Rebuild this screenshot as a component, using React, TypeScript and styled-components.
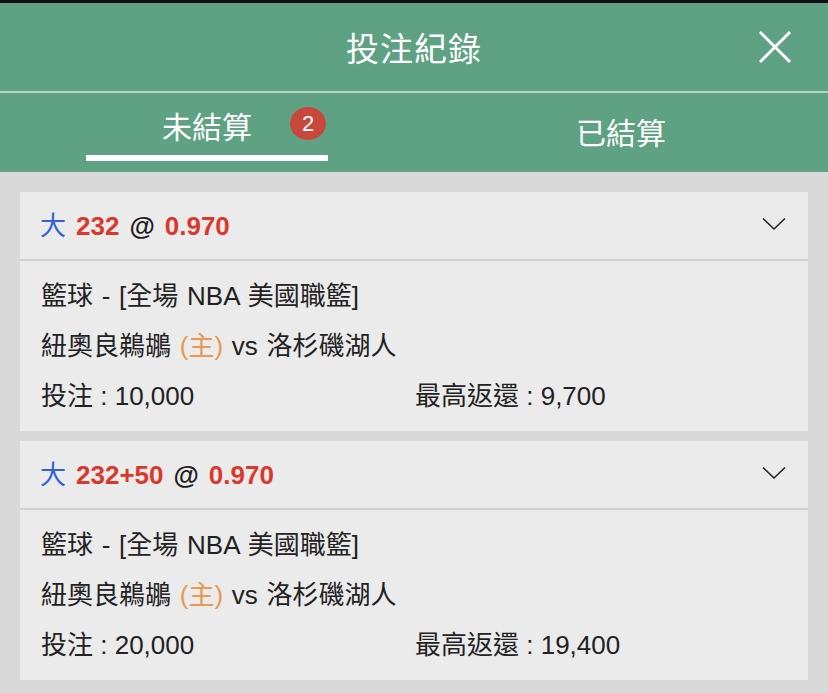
import React from 'react';
import styled, { createGlobalStyle } from 'styled-components';

const GlobalStyle = createGlobalStyle`
    html, body {
        margin: 0;
        padding: 0;
        background: #d9d9d9;
    }
    body {
        font-family: "Liberation Sans", "Noto Sans CJK TC", sans-serif;
        color: #222222;
    }
`;

const Page = styled.div`
    width: 828px;
    min-height: 693px;
    background: #d9d9d9;
    border-top: 3px solid #111111;
`;

const Header = styled.div`
    background: #5fa283;
`;

const TitleBar = styled.div`
    height: 88px;
    display: flex;
    align-items: center;
    justify-content: center;
    position: relative;
    border-bottom: 2px solid #b3d6c2;
`;

const Title = styled.h1`
    margin: 0;
    font-size: 33px;
    font-weight: 400;
    color: #ffffff;
    letter-spacing: 1px;
`;

const CloseButton = styled.button`
    position: absolute;
    right: 34px;
    top: 25px;
    width: 38px;
    height: 38px;
    padding: 0;
    border: none;
    background: transparent;
    display: flex;
    align-items: center;
    justify-content: center;
`;

const Tabs = styled.div`
    height: 79px;
    display: grid;
    grid-template-columns: 1fr 1fr;
`;

const Tab = styled.div<{ $active?: boolean }>`
    display: flex;
    flex-direction: column;
    align-items: center;
    justify-content: flex-end;
    padding-bottom: ${(p) => (p.$active ? '11px' : '18px')};
`;

const TabLabel = styled.div<{ $active?: boolean }>`
    position: relative;
    font-size: 30px;
    color: #ffffff;
    line-height: 40px;
    margin-bottom: ${(p) => (p.$active ? '7px' : '0')};
`;

const Badge = styled.span`
    position: absolute;
    left: 128px;
    top: -1px;
    width: 36px;
    height: 33px;
    border-radius: 50%;
    background: #c9483c;
    color: #ffffff;
    font-size: 22px;
    line-height: 33px;
    text-align: center;
`;

const Underline = styled.div`
    width: 242px;
    height: 6px;
    background: #ffffff;
`;

const List = styled.div`
    display: flex;
    flex-direction: column;
    gap: 10px;
    padding: 20px 20px 13px;
`;

const Card = styled.div`
    background: #ebebeb;
`;

const CardHead = styled.div`
    height: 63px;
    display: flex;
    align-items: center;
    justify-content: space-between;
    padding: 0 22px 4px 20px;
    border-bottom: 2px solid #d0d0d0;
    font-size: 26px;
    font-weight: 700;
`;

const Pick = styled.span<{ $tone: 'blue' | 'red' | 'dark' }>`
    color: ${(p) => (p.$tone === 'blue' ? '#3461d8' : p.$tone === 'red' ? '#d9392c' : '#1e1e1e')};
    font-weight: ${(p) => (p.$tone === 'blue' ? 400 : 700)};
    margin-right: 10px;
`;

const CardBody = styled.div`
    padding: 10px 21px;
    font-size: 26px;
    line-height: 50px;
    word-spacing: 1.5px;
`;

const Line = styled.div``;

const Home = styled.span`
    color: #e89a52;
`;

const Amounts = styled.div`
    display: grid;
    grid-template-columns: 374px 1fr;
    word-spacing: 0;
`;

const Chevron = () => (
    <svg width="24" height="14" viewBox="0 0 24 14" fill="none">
        <path d="M1 1.5 L12 12 L23 1.5" stroke="#222" strokeWidth="1.6" />
    </svg>
);

const CloseIcon = () => (
    <svg width="34" height="34" viewBox="0 0 34 34" fill="none">
        <path d="M2 2 L32 32 M32 2 L2 32" stroke="#fff" strokeWidth="3" />
    </svg>
);

type Bet = {
    line: string;
    odds: string;
    stake: string;
    payout: string;
};

const bets: Bet[] = [
    { line: '232', odds: '0.970', stake: '10,000', payout: '9,700' },
    { line: '232+50', odds: '0.970', stake: '20,000', payout: '19,400' },
];

const BetCard = ({ bet }: { bet: Bet }) => (
    <Card>
        <CardHead>
            <div>
                <Pick $tone="blue">大</Pick>
                <Pick $tone="red">{bet.line}</Pick>
                <Pick $tone="dark">@</Pick>
                <Pick $tone="red">{bet.odds}</Pick>
            </div>
            <Chevron />
        </CardHead>
        <CardBody>
            <Line>籃球 - [全場 NBA 美國職籃]</Line>
            <Line>
                紐奧良鵜鶘 <Home>(主)</Home> vs 洛杉磯湖人
            </Line>
            <Amounts>
                <span>投注 : {bet.stake}</span>
                <span>最高返還 : {bet.payout}</span>
            </Amounts>
        </CardBody>
    </Card>
);

export default function App() {
    return (
        <Page>
            <GlobalStyle />
            <Header>
                <TitleBar>
                    <Title>投注紀錄</Title>
                    <CloseButton>
                        <CloseIcon />
                    </CloseButton>
                </TitleBar>
                <Tabs>
                    <Tab $active>
                        <TabLabel $active>
                            未結算
                            <Badge>2</Badge>
                        </TabLabel>
                        <Underline />
                    </Tab>
                    <Tab>
                        <TabLabel>已結算</TabLabel>
                    </Tab>
                </Tabs>
            </Header>
            <List>
                {bets.map((bet) => (
                    <BetCard key={bet.line} bet={bet} />
                ))}
            </List>
        </Page>
    );
}
